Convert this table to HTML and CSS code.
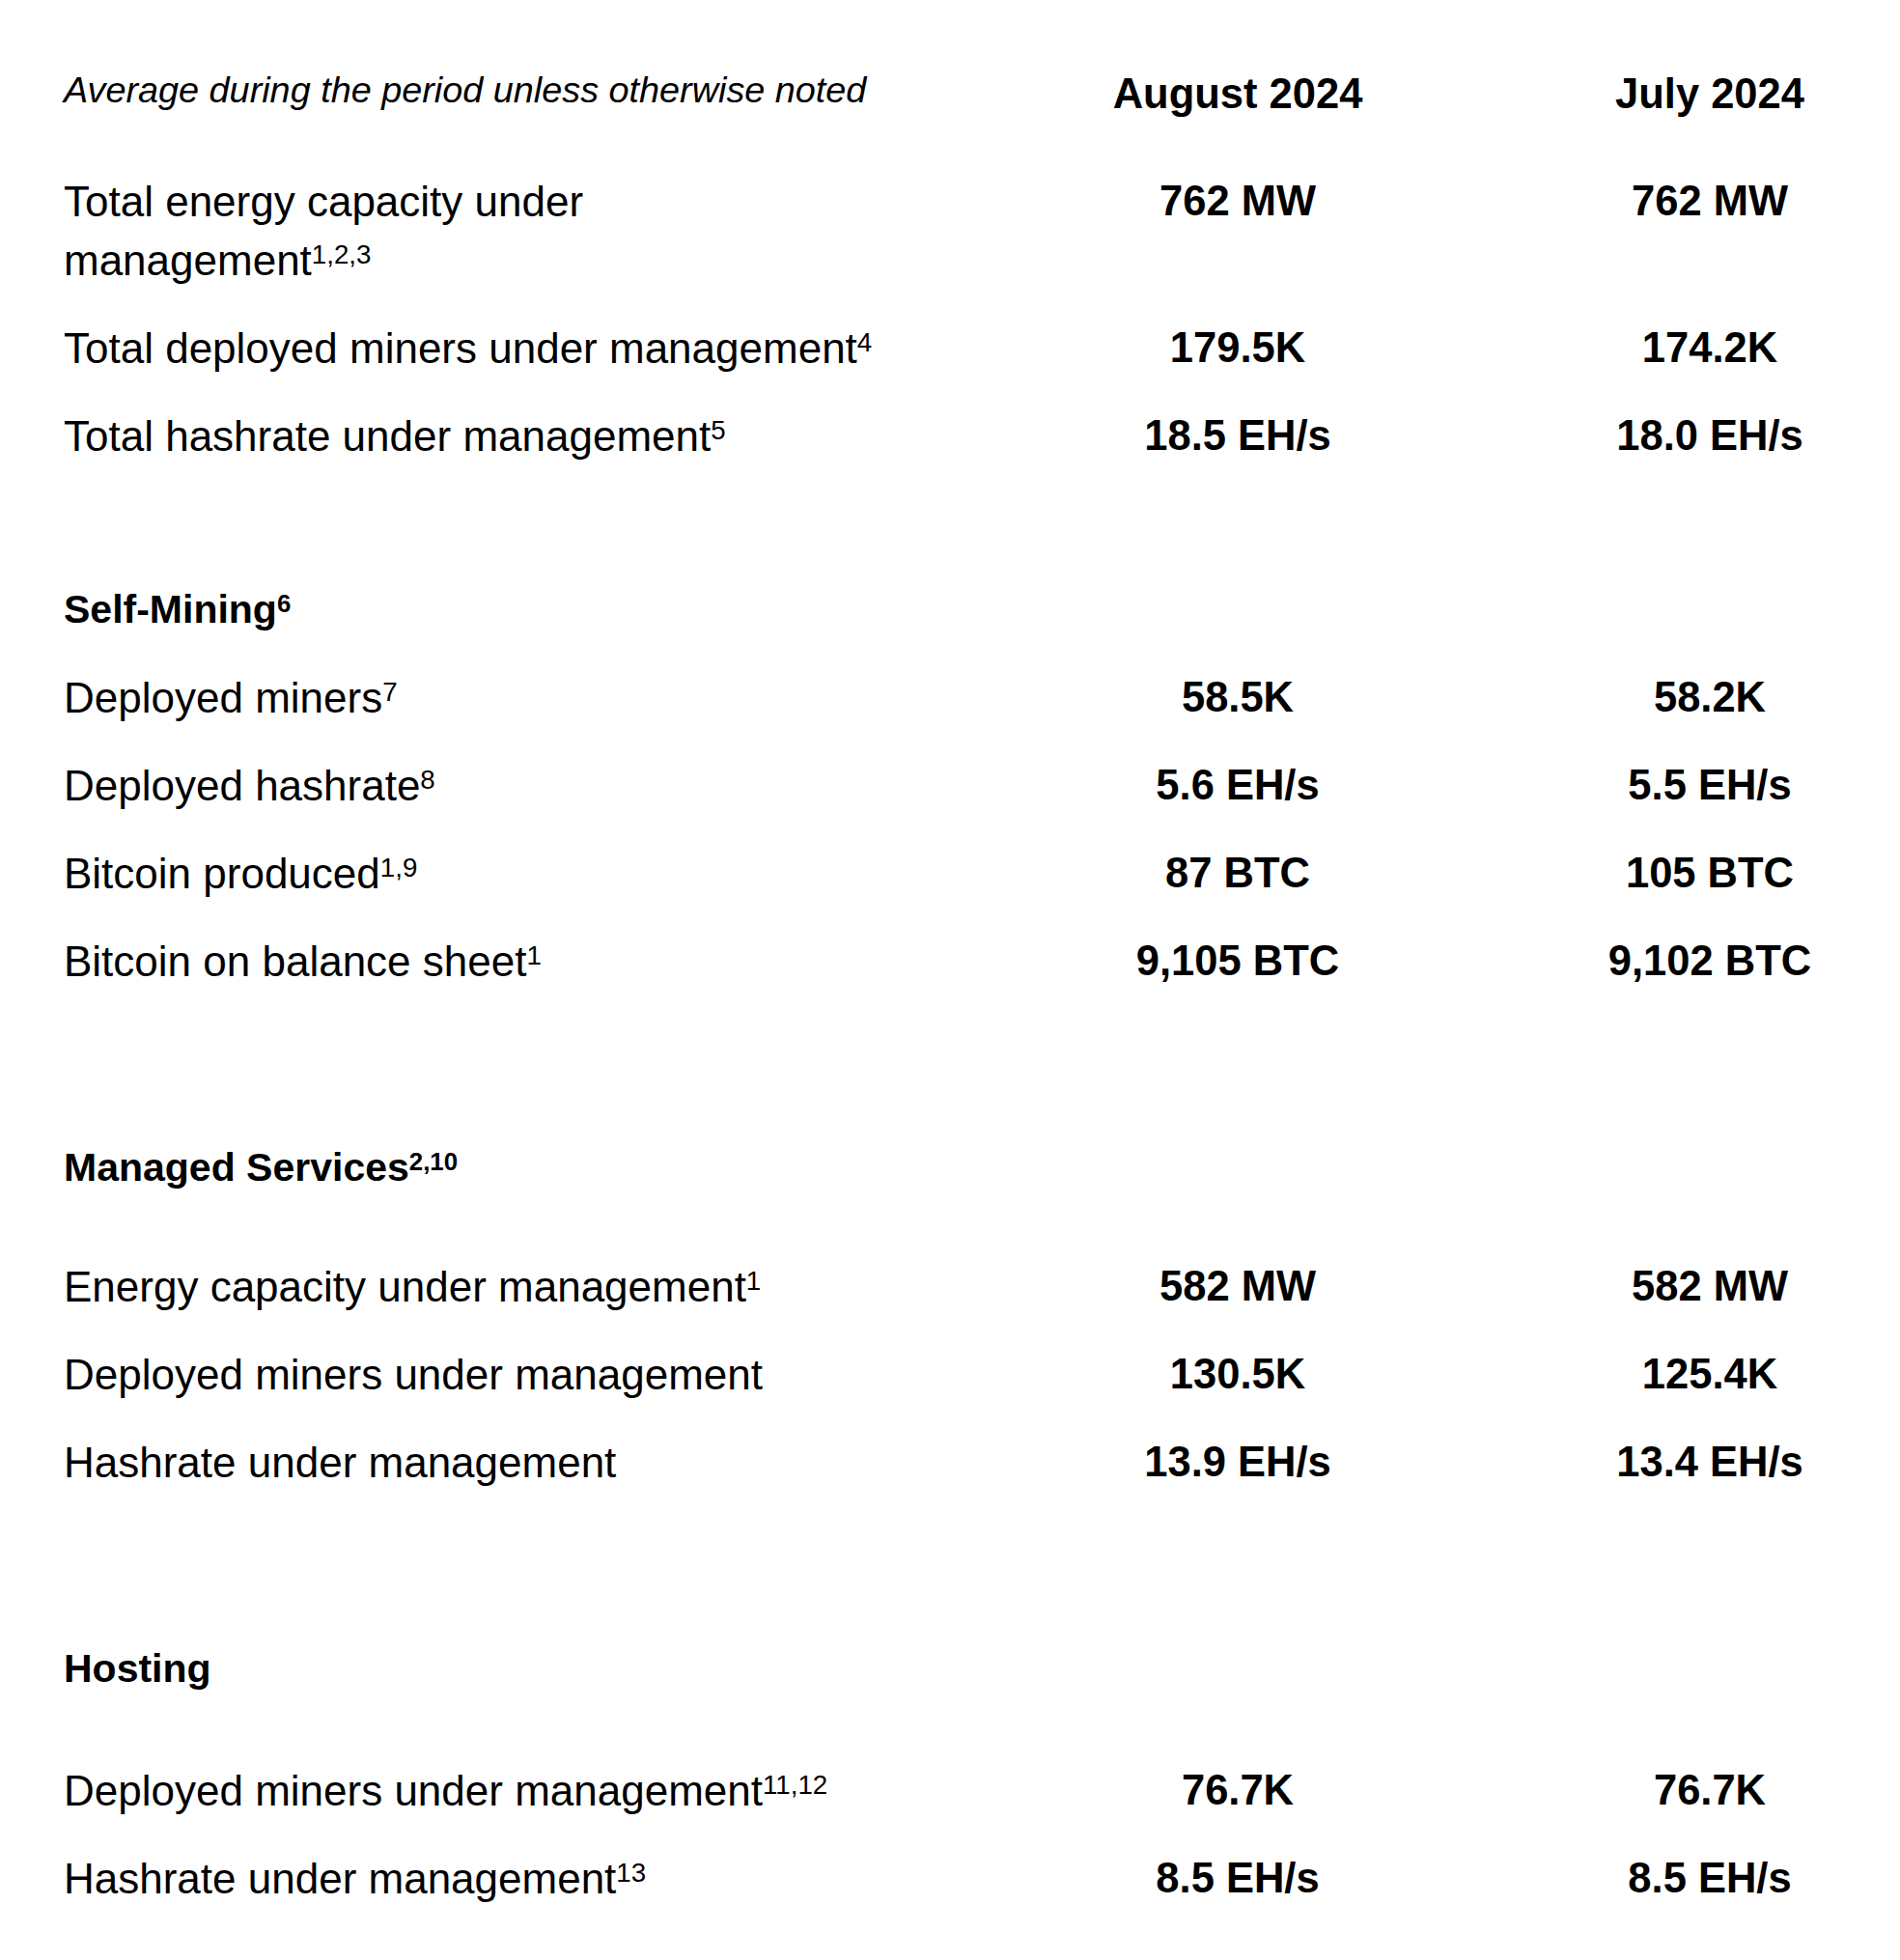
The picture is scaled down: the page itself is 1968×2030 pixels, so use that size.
FILE: index.html
```html
<!DOCTYPE html>
<html lang="en">
<head>
<meta charset="utf-8">
<title>Operational metrics</title>
<link rel="stylesheet" href="styles.css">
</head>
<body>
<div class="table">
  <div class="row head">
    <div class="note">Average during the period unless otherwise noted</div>
    <div class="val">August 2024</div>
    <div class="val">July 2024</div>
  </div>

  <div class="row first">
    <div class="label">Total energy capacity under<br>management<sup>1,2,3</sup></div>
    <div class="val">762 MW</div>
    <div class="val">762 MW</div>
  </div>
  <div class="row">
    <div class="label">Total deployed miners under management<sup>4</sup></div>
    <div class="val">179.5K</div>
    <div class="val">174.2K</div>
  </div>
  <div class="row">
    <div class="label">Total hashrate under management<sup>5</sup></div>
    <div class="val">18.5 EH/s</div>
    <div class="val">18.0 EH/s</div>
  </div>

  <div class="row section s-self">
    <div class="heading">Self-Mining<sup>6</sup></div>
  </div>
  <div class="row">
    <div class="label">Deployed miners<sup>7</sup></div>
    <div class="val">58.5K</div>
    <div class="val">58.2K</div>
  </div>
  <div class="row">
    <div class="label">Deployed hashrate<sup>8</sup></div>
    <div class="val">5.6 EH/s</div>
    <div class="val">5.5 EH/s</div>
  </div>
  <div class="row">
    <div class="label">Bitcoin produced<sup>1,9</sup></div>
    <div class="val">87 BTC</div>
    <div class="val">105 BTC</div>
  </div>
  <div class="row">
    <div class="label">Bitcoin on balance sheet<sup>1</sup></div>
    <div class="val">9,105 BTC</div>
    <div class="val">9,102 BTC</div>
  </div>

  <div class="row section s-managed">
    <div class="heading">Managed Services<sup>2,10</sup></div>
  </div>
  <div class="row after-head">
    <div class="label">Energy capacity under management<sup>1</sup></div>
    <div class="val">582 MW</div>
    <div class="val">582 MW</div>
  </div>
  <div class="row">
    <div class="label">Deployed miners under management</div>
    <div class="val">130.5K</div>
    <div class="val">125.4K</div>
  </div>
  <div class="row">
    <div class="label">Hashrate under management</div>
    <div class="val">13.9 EH/s</div>
    <div class="val">13.4 EH/s</div>
  </div>

  <div class="row section s-hosting">
    <div class="heading">Hosting</div>
  </div>
  <div class="row after-head-lg">
    <div class="label">Deployed miners under management<sup>11,12</sup></div>
    <div class="val">76.7K</div>
    <div class="val">76.7K</div>
  </div>
  <div class="row">
    <div class="label">Hashrate under management<sup>13</sup></div>
    <div class="val">8.5 EH/s</div>
    <div class="val">8.5 EH/s</div>
  </div>
</div>
</body>
</html>
```

FILE: styles.css
```css
html, body {
  margin: 0;
  padding: 0;
  background: #ffffff;
}

body {
  color: #000000;
  font-family: "Liberation Sans", Arial, sans-serif;
}

.table {
  display: flex;
  flex-direction: column;
  padding: 67px 0 0 66px;
}

.row {
  display: grid;
  grid-template-columns: 922px 390px 390px;
  column-gap: 99px;
  line-height: 61px;
  align-items: start;
}

.row + .row {
  margin-top: 30px;
}

.row.first {
  margin-top: 50px;
}

.row.s-self {
  margin-top: 119px;
}

.row.s-managed {
  margin-top: 153px;
}

.row.s-hosting {
  margin-top: 153px;
}

.row.after-head {
  margin-top: 62px;
}

.row.after-head-lg {
  margin-top: 65px;
}

.note {
  font-style: italic;
  font-size: 37.8px;
  line-height: 53px;
}

.label {
  font-size: 44px;
  white-space: nowrap;
}

.heading {
  font-size: 41px;
  font-weight: 700;
  white-space: nowrap;
}

.val {
  text-align: center;
  font-weight: 700;
  font-size: 43.5px;
  white-space: nowrap;
}

sup {
  font-size: 0.63em;
  line-height: 0;
  vertical-align: 0.44em;
  font-weight: 400;
}

.heading sup {
  font-weight: 700;
}
```
